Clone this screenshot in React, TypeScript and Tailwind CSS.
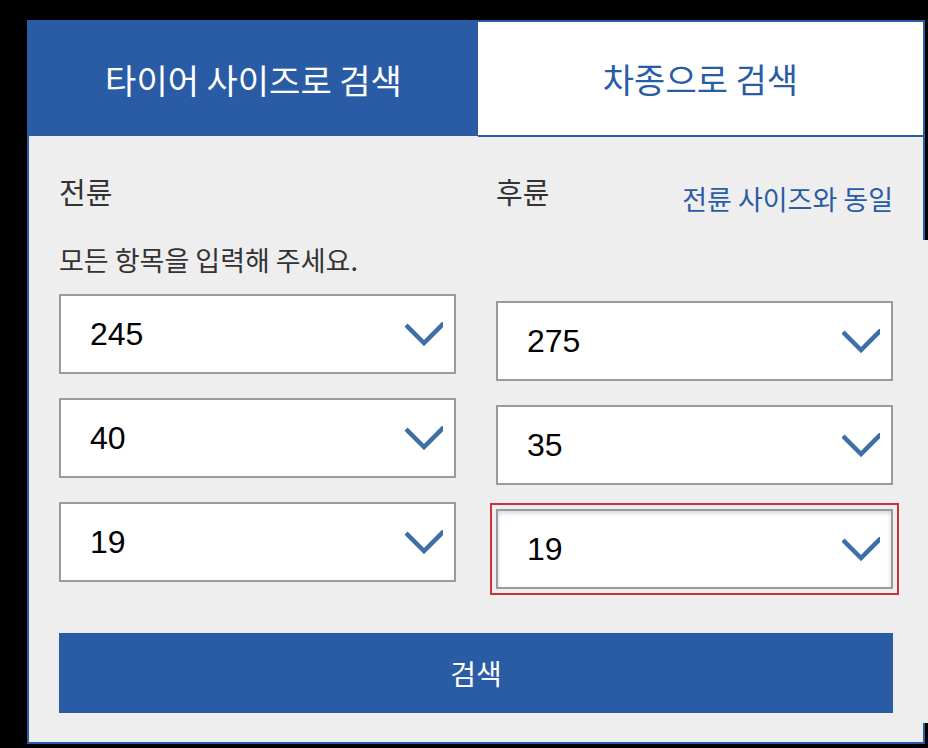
import React from 'react';

const Chevron: React.FC = () => (
  <svg width="38" height="24" viewBox="0 0 38 24" className="shrink-0">
    <polyline points="1,3 19,21 40,0" fill="none" stroke="#3c6ea8" strokeWidth="4.5" />
  </svg>
);

const SizeSelect: React.FC<{ value: string; focused?: boolean }> = ({ value, focused }) => (
  <div
    className={`h-[80px] bg-white border-2 border-[#9b9b9b] flex items-center justify-between pl-[29px] pr-[11px] ${
      focused ? 'outline-2 outline-offset-4 outline-[#c8323a] shadow-[inset_0_2px_4px_rgba(60,90,140,0.25)]' : ''
    }`}
  >
    <span className="font-['Liberation_Sans',sans-serif] text-[32px] leading-none text-black">{value}</span>
    <Chevron />
  </div>
);

export default function App() {
  return (
    <div className="relative min-h-screen bg-black pt-[20px] pl-[27px] font-['Noto_Sans_CJK_KR','Noto_Sans',sans-serif]">
      <div className="w-[898px] h-[724px] border-2 border-[#2a5ca5] bg-[#eeeeee] flex flex-col">
        {/* Tabs */}
        <div className="flex h-[115px]">
          <div className="w-[449px] h-[114px] bg-[#2a5ca5] text-white text-[34px] flex items-center justify-center">
            타이어 사이즈로 검색
          </div>
          <div className="flex-1 bg-white text-[#2a5ca5] text-[34px] border-b-2 border-[#2a5ca5] flex items-center justify-center">
            차종으로 검색
          </div>
        </div>

        {/* Form */}
        <div className="px-[30px] pt-[40px]">
          <div className="grid grid-cols-2 gap-x-[40px] items-start">
            <div>
              <h3 className="text-[29px] leading-none text-[#333]">전륜</h3>
              <p className="mt-[40px] text-[27px] leading-none text-[#333]">모든 항목을 입력해 주세요.</p>
              <div className="mt-[21px] flex flex-col gap-[24px]">
                <SizeSelect value="245" />
                <SizeSelect value="40" />
                <SizeSelect value="19" />
              </div>
            </div>
            <div>
              <div className="flex justify-between items-start">
                <h3 className="text-[29px] leading-none text-[#333]">후륜</h3>
                <a className="mt-[8px] text-[27px] leading-none text-[#2a5ca5]">전륜 사이즈와 동일</a>
              </div>
              <div className="mt-[89px] flex flex-col gap-[24px]">
                <SizeSelect value="275" />
                <SizeSelect value="35" />
                <SizeSelect value="19" focused />
              </div>
            </div>
          </div>
          <button className="mt-[44px] w-full h-[80px] bg-[#2a5ca5] text-white text-[28px]">검색</button>
        </div>
      </div>
      {/* overlapping light strip at the right edge */}
      <div className="absolute left-[923px] top-[240px] w-[5px] h-[483px] bg-[#eeeeee]" />
    </div>
  );
}
